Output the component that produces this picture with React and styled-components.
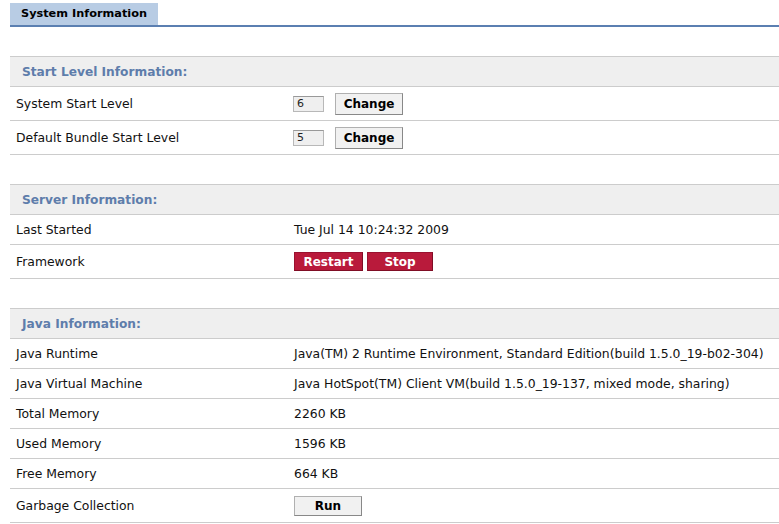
import React from "react";
import styled, { createGlobalStyle } from "styled-components";

const GlobalStyle = createGlobalStyle`
  body {
    margin: 0;
    background: #fff;
    font-family: "DejaVu Sans", Verdana, sans-serif;
    font-size: 12.4px;
    color: #111;
  }
`;

const Page = styled.div`
  padding: 3px 0 0 10px;
`;

const TabBar = styled.div`
  display: flex;
  border-bottom: 2px solid #5b7fb1;
`;

const Tab = styled.div`
  background: #b8cce4;
  height: 22px;
  line-height: 22px;
  padding: 0 11px;
  font-weight: bold;
  font-size: 11.3px;
  color: #000;
`;

const Section = styled.div`
  margin-top: 29px;
  border-top: 1px solid #cccccc;
`;

const SectionHeader = styled.div`
  background: #efefef;
  height: 29px;
  display: flex;
  align-items: center;
  padding-left: 12px;
  border-bottom: 1px solid #cccccc;
  font-weight: bold;
  font-size: 12.2px;
  color: #5e7dab;
`;

const Row = styled.div`
  display: grid;
  grid-template-columns: 278px 1fr;
  align-items: center;
  min-height: ${(p) => (p.$tall ? 33 : 29)}px;
  padding: 0 6px;
  border-bottom: 1px solid #cccccc;
`;

const Value = styled.div`
  display: flex;
  align-items: center;
  gap: 4px;
  white-space: nowrap;
`;

const LevelInput = styled.input`
  width: 31px;
  height: 16px;
  box-sizing: border-box;
  margin: 0 7px 0 -1px;
  padding: 0 0 0 3px;
  background: #efefef;
  border: 1px solid #b8b8b8;
  border-top-color: #999;
  font-family: inherit;
  font-size: 11px;
  color: #222;
  outline: none;
`;

const Button = styled.button`
  width: ${(p) => p.$w || 68}px;
  height: ${(p) => p.$h || 22}px;
  padding: 0;
  font-family: inherit;
  font-size: 12px;
  font-weight: bold;
  cursor: pointer;
  color: ${(p) => (p.$danger ? "#fff" : "#000")};
  background: ${(p) => (p.$danger ? "#b91a3b" : "#f1f1f1")};
  border: 1px solid ${(p) => (p.$danger ? "#9a1230" : "#b0b0b0")};
  border-bottom-color: ${(p) => (p.$danger ? "#7f0d25" : "#888")};
  border-right-color: ${(p) => (p.$danger ? "#7f0d25" : "#888")};
`;

const App = () => {
  return (
    <>
      <GlobalStyle />
      <Page>
        <TabBar>
          <Tab>System Information</Tab>
        </TabBar>

        <Section>
          <SectionHeader>Start Level Information:</SectionHeader>
          <Row $tall>
            <div>System Start Level</div>
            <Value>
              <LevelInput defaultValue="6" />
              <Button>Change</Button>
            </Value>
          </Row>
          <Row $tall>
            <div>Default Bundle Start Level</div>
            <Value>
              <LevelInput defaultValue="5" />
              <Button>Change</Button>
            </Value>
          </Row>
        </Section>

        <Section>
          <SectionHeader>Server Information:</SectionHeader>
          <Row>
            <div>Last Started</div>
            <Value>Tue Jul 14 10:24:32 2009</Value>
          </Row>
          <Row $tall>
            <div>Framework</div>
            <Value>
              <Button $danger $w={69} $h={19}>Restart</Button>
              <Button $danger $w={66} $h={19}>Stop</Button>
            </Value>
          </Row>
        </Section>

        <Section>
          <SectionHeader>Java Information:</SectionHeader>
          <Row>
            <div>Java Runtime</div>
            <Value>Java(TM) 2 Runtime Environment, Standard Edition(build 1.5.0_19-b02-304)</Value>
          </Row>
          <Row>
            <div>Java Virtual Machine</div>
            <Value>Java HotSpot(TM) Client VM(build 1.5.0_19-137, mixed mode, sharing)</Value>
          </Row>
          <Row>
            <div>Total Memory</div>
            <Value>2260 KB</Value>
          </Row>
          <Row>
            <div>Used Memory</div>
            <Value>1596 KB</Value>
          </Row>
          <Row>
            <div>Free Memory</div>
            <Value>664 KB</Value>
          </Row>
          <Row $tall>
            <div>Garbage Collection</div>
            <Value>
              <Button $w={68} $h={20}>Run</Button>
            </Value>
          </Row>
        </Section>
      </Page>
    </>
  );
};

export default App;
